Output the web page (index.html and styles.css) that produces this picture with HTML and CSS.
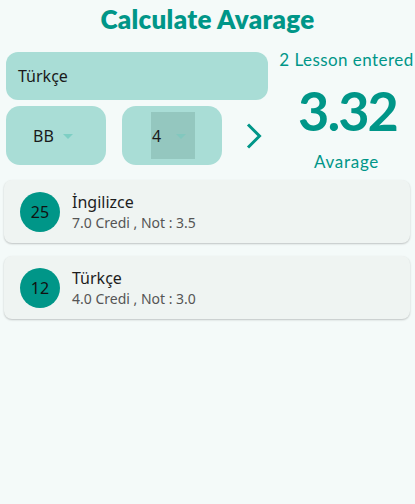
FILE: index.html
```html
<!DOCTYPE html>
<html>
<head>
<meta charset="utf-8">
<link rel="stylesheet" href="styles.css">
</head>
<body>
<h1 class="title">Calculate Avarage</h1>
<div class="top">
  <div class="form">
    <div class="input">Türkçe</div>
    <div class="row">
      <div class="drop"><span class="val">BB</span><span class="arrow"></span></div>
      <div class="drop"><div class="focus"><span class="val">4</span><span class="arrow"></span></div></div>
      <svg class="chev" width="16" height="26" viewBox="0 0 16 26"><path d="M2 1.5 L13.5 13 L2 24.5" fill="none" stroke="#009688" stroke-width="3"/></svg>
    </div>
  </div>
  <div class="summary">
    <div class="count">2 Lesson entered</div>
    <div class="avg">3.32</div>
    <div class="avg-label">Avarage</div>
  </div>
</div>
<div class="list">
  <div class="card">
    <div class="badge">25</div>
    <div class="info">
      <div class="name">İngilizce</div>
      <div class="sub">7.0 Credi , Not : 3.5</div>
    </div>
  </div>
  <div class="card">
    <div class="badge">12</div>
    <div class="info">
      <div class="name">Türkçe</div>
      <div class="sub">4.0 Credi , Not : 3.0</div>
    </div>
  </div>
</div>
</body>
</html>
```
FILE: styles.css
```css
html, body {
  margin: 0;
  padding: 0;
}
body {
  background: #f4faf9;
  width: 415px;
  height: 504px;
  font-family: "Noto Sans", "DejaVu Sans", sans-serif;
  color: #1d1d1d;
}
.title {
  margin: 0;
  padding-top: 3px;
  height: 44px;
  text-align: center;
  font-family: "Lato", sans-serif;
  font-weight: 800;
  font-size: 26px;
  line-height: 32px;
  color: #009688;
  letter-spacing: 0.3px;
}
.top {
  display: flex;
  padding: 5px 0 0 6px;
  height: 128px;
}
.form {
  width: 262px;
  display: flex;
  flex-direction: column;
  gap: 6px;
}
.input {
  height: 48px;
  background: #a9ddd6;
  border-radius: 12px;
  display: flex;
  align-items: center;
  padding-left: 12px;
  font-size: 16px;
  color: #1a1a1a;
}
.row {
  display: flex;
  align-items: center;
  height: 59px;
}
.drop {
  width: 100px;
  height: 59px;
  background: #a9ddd6;
  border-radius: 14px;
  display: flex;
  align-items: center;
  justify-content: center;
  font-size: 16px;
  margin-right: 16px;
}
.drop:first-child .val { margin-left: -6px; }
.focus {
  width: 43px;
  height: 47px;
  background: #94c7bf;
  display: flex;
  align-items: center;
  padding-left: 1px;
  margin-left: 2px;
}
.val { color: #1a1a1a; }
.arrow {
  width: 0;
  height: 0;
  border-left: 5px solid transparent;
  border-right: 5px solid transparent;
  border-top: 5px solid #7ecfc4;
  margin-left: 9px;
  margin-top: 2px;
}
.focus .arrow { margin-left: 15px; border-top-color: #82c8be; }
.chev {
  margin-left: 8px;
  margin-top: 1px;
}
.summary {
  flex: 1;
  padding-left: 10px;
  display: flex;
  flex-direction: column;
  align-items: center;
  font-family: "Lato", sans-serif;
  color: #009688;
}
.count {
  font-size: 17px;
  line-height: 18px;
  margin-top: -1px;
  letter-spacing: 0.45px;
  white-space: nowrap;
}
.avg {
  font-size: 54px;
  font-weight: 700;
  line-height: 54px;
  margin-top: 15px;
  letter-spacing: -2px;
  margin-right: -2px;
}
.avg-label {
  font-size: 17px;
  line-height: 20px;
  margin-top: 14px;
  letter-spacing: 0.7px;
}
.list {
  padding: 0 5px 0 4px;
  display: flex;
  flex-direction: column;
  gap: 13px;
}
.card {
  height: 63px;
  background: #eff4f2;
  border-radius: 8px;
  box-shadow: 0 1px 2px rgba(0,0,0,0.22);
  display: flex;
  align-items: center;
  padding-left: 16px;
}
.badge {
  width: 40px;
  height: 40px;
  border-radius: 50%;
  background: #009688;
  display: flex;
  align-items: center;
  justify-content: center;
  font-size: 16px;
  color: #111;
}
.info {
  margin-left: 12px;
  display: flex;
  flex-direction: column;
}
.name {
  font-size: 16px;
  line-height: 22px;
  color: #1d1d1d;
}
.sub {
  font-size: 14px;
  line-height: 19px;
  color: #555;
}
```
